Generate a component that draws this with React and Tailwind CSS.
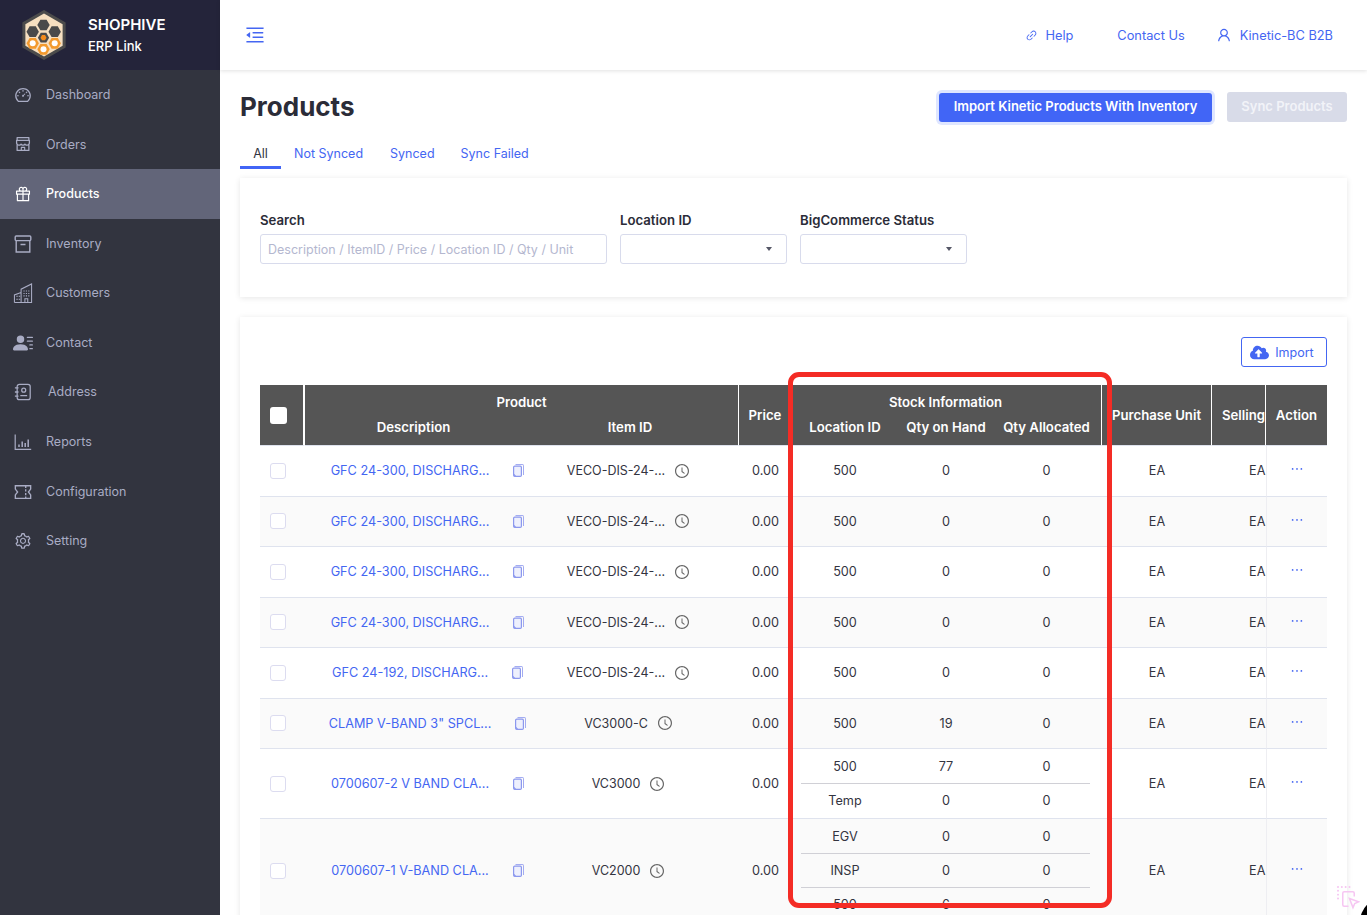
import React from "react";
import {
  AiOutlineDashboard,
  AiOutlineShop,
  AiOutlineGift,
  AiOutlineSetting,
  AiOutlineMenuFold,
  AiOutlineLink,
  AiOutlineUser,
  AiOutlineClockCircle,
  AiOutlineEllipsis,
} from "react-icons/ai";
import { BsPersonLinesFill } from "react-icons/bs";
import { FaCloudUploadAlt } from "react-icons/fa";

const hex = (cx, cy, r, flat) =>
  [0, 1, 2, 3, 4, 5]
    .map((i) => {
      const a = (Math.PI / 3) * i + (flat ? 0 : Math.PI / 6);
      return `${(cx + r * Math.cos(a)).toFixed(2)},${(cy + r * Math.sin(a)).toFixed(2)}`;
    })
    .join(" ");

const Logo = () => (
  <svg width="46" height="50" viewBox="0 0 46 50" className="shrink-0">
    <polygon points={hex(23, 25, 25)} fill="#4b4b4b" />
    <polygon points={hex(23, 25, 21.5)} fill="#f6dfc0" />
    <polygon points={hex(22.5, 15, 6.2, true)} fill="#4a4a4a" />
    <polygon points={hex(11.7, 21.7, 6.2, true)} fill="#4a4a4a" />
    <polygon points={hex(33.7, 21.7, 6.2, true)} fill="#4a4a4a" />
    <polygon points={hex(22.5, 27.7, 5.6, true)} fill="#4a4a4a" />
    <polygon points={hex(22.5, 27.7, 3, true)} fill="#f28a1c" />
    {[[11.7, 33.3], [22.5, 39.3], [33.7, 33.3]].map(([x, y]) => (
      <g key={x}>
        <polygon points={hex(x, y, 6.2, true)} fill="#f39a2e" />
        <circle cx={x} cy={y} r="3" fill="#fff" />
      </g>
    ))}
  </svg>
);

const ArchiveIcon = (props) => (
  <svg viewBox="0 0 18 18" fill="none" stroke="currentColor" strokeWidth="1.4" {...props}>
    <rect x="1.2" y="1" width="15.6" height="4.6" rx="1" />
    <path d="M2.2 5.6V17h13.6V5.6M6.5 9.5h5" />
  </svg>
);

const BuildingIcon = (props) => (
  <svg viewBox="0 0 20 21" fill="none" stroke="currentColor" strokeWidth="1.1" {...props}>
    <path d="M1 20.5v-8l7-2.5M1 20.5h18V1L8 6.500v14" />
    <path d="M3 14h1.500M5.500 14H7M3 17h1.500M5.500 17H7" />
    <path d="M10.500 8.500h1.200M13 8.500h1.200M15.500 8.500h1.200M10.500 11h1.200M13 11h1.200M15.500 11h1.200M10.500 13.500h1.200M13 13.500h1.200M15.500 13.500h1.200M12 20.500V16.500h3v4" />
  </svg>
);

const AddressIcon = (props) => (
  <svg viewBox="0 0 20 20" fill="none" stroke="currentColor" strokeWidth="1.4" {...props}>
    <rect x="3.5" y="1.5" width="14.5" height="17" rx="2.5" />
    <circle cx="10.8" cy="8" r="2.2" />
    <path d="M7 14h7.600M1 5.500h4M1 10h4M1 14.500h4" />
  </svg>
);

const ReportIcon = (props) => (
  <svg viewBox="0 0 18 18" fill="none" stroke="currentColor" strokeWidth="1.2" {...props}>
    <path d="M1.200 1.500v14.800h16" />
    <path d="M5 14v-2.500M8.200 14V8.500M11.200 14v-4M14.200 14V6.500" strokeWidth="1.5" />
  </svg>
);

const ConfigIcon = (props) => (
  <svg viewBox="0 0 20 16" fill="none" stroke="currentColor" strokeWidth="1.5" {...props}>
    <path d="M1.500 1h17v3.800L16 8l2.500 3.200V15h-17v-3.800L4 8 1.500 4.800z" />
    <path d="M13 1v14" strokeDasharray="2.5 1.5" />
  </svg>
);

const CopyIcon = () => (
  <svg width="11" height="13" viewBox="0 0 11 13" fill="none" className="shrink-0">
    <path d="M2.500 .6h7.400c.4 0 .7.3.7.7V11" stroke="#9aa4f0" strokeWidth="1" />
    <rect x="0.6" y="2.1" width="7.8" height="10.3" rx="1.2" fill="#eef0fd" stroke="#8c98ee" strokeWidth="1.2" />
    <path d="M.8 9.500l2.600 2.700H1.200z" fill="#8c98ee" />
  </svg>
);

const CursorIcon = (props) => (
  <svg viewBox="0 0 24 25" fill="none" stroke="#f6c6f2" strokeWidth="1.6" {...props}>
    <path d="M1 1h.1M5 1h.1M9 1h.1M13 1h.1M1 5h.1M1 9h.1M1 13h.1" strokeWidth="2" strokeLinecap="round" />
    <path d="M18 11V7.500A1.500 1.500 0 0 0 16.500 6h-9A1.500 1.500 0 0 0 6 7.500v12A1.500 1.500 0 0 0 7.500 21H12" />
    <path d="M13 13l9.500 3.500-4 1.700-1.800 4.300z" />
  </svg>
);

const nav = [
  { label: "Dashboard", Icon: AiOutlineDashboard },
  { label: "Orders", Icon: AiOutlineShop },
  { label: "Products", Icon: AiOutlineGift, active: true },
  { label: "Inventory", Icon: ArchiveIcon },
  { label: "Customers", Icon: BuildingIcon, big: true },
  { label: "Contact", Icon: BsPersonLinesFill, big: true },
  { label: "Address", Icon: AddressIcon, shift: true },
  { label: "Reports", Icon: ReportIcon },
  { label: "Configuration", Icon: ConfigIcon },
  { label: "Setting", Icon: AiOutlineSetting },
];

const rows = [
  { name: "GFC 24-300, DISCHARG...", item: "VECO-DIS-24-...", stock: [["500", "0", "0"]] },
  { name: "GFC 24-300, DISCHARG...", item: "VECO-DIS-24-...", stock: [["500", "0", "0"]] },
  { name: "GFC 24-300, DISCHARG...", item: "VECO-DIS-24-...", stock: [["500", "0", "0"]] },
  { name: "GFC 24-300, DISCHARG...", item: "VECO-DIS-24-...", stock: [["500", "0", "0"]] },
  { name: "GFC 24-192, DISCHARG...", item: "VECO-DIS-24-...", stock: [["500", "0", "0"]] },
  { name: 'CLAMP V-BAND 3" SPCL...', item: "VC3000-C", stock: [["500", "19", "0"]] },
  { name: "0700607-2 V BAND CLA...", item: "VC3000", stock: [["500", "77", "0"], ["Temp", "0", "0"]] },
  { name: "0700607-1 V-BAND CLA...", item: "VC2000", stock: [["EGV", "0", "0"], ["INSP", "0", "0"], ["500", "6", "0"]] },
];

const Sidebar = () => (
  <aside className="w-[220px] shrink-0 bg-[#32343f] flex flex-col">
    <div className="h-[70px] bg-[#24243a] flex items-center pl-[21px] gap-[21px]">
      <Logo />
      <div className="text-white">
        <div className="text-[15px] font-semibold leading-[22px]">SHOPHIVE</div>
        <div className="text-[13px] font-medium leading-[20px]">ERP Link</div>
      </div>
    </div>
    {nav.map(({ label, Icon, active, shift, big }) => (
      <div
        key={label}
        className={`h-[49.6px] flex items-center text-[12.5px] ${big ? "pl-[13px]" : "pl-[14px]"} ${active ? "bg-[#626579] text-white font-medium" : "text-[#a9acc4]"}`}
      >
        <span className={`shrink-0 ${big ? "w-[33px]" : "w-[32px]"}`}>
          <Icon className={big ? "w-[20px] h-[20px]" : "w-[18px] h-[18px]"} />
        </span>
        <span className={`pt-[1px] ${shift ? "ml-[2px]" : ""}`}>{label}</span>
      </div>
    ))}
  </aside>
);

const TopBar = () => (
  <header className="h-[70px] shrink-0 bg-white shadow-[0_1px_4px_rgba(0,0,0,0.12)] flex items-center justify-between pl-[24px] pr-[34px] text-[12.8px] text-[#4466f2] relative">
    <AiOutlineMenuFold className="w-[22px] h-[22px]" />
    <div className="flex items-center pt-[1px]">
      <AiOutlineLink className="w-[13px] h-[13px] mr-[7px]" />
      <span>Help</span>
      <span className="ml-[44px]">Contact Us</span>
      <AiOutlineUser className="w-[16px] h-[16px] ml-[31px] mr-[8px] -mt-[2px]" />
      <span>Kinetic-BC B2B</span>
    </div>
  </header>
);

const Select = () => (
  <div className="h-[30px] border border-[#d8dbec] rounded-[3px] flex items-center justify-end pr-[14px]">
    <span className="w-0 h-0 border-x-[3.5px] border-x-transparent border-t-[4px] border-t-[#555766]" />
  </div>
);

const Filters = () => (
  <section className="h-[119px] bg-white shadow-[0_1px_6px_rgba(0,0,0,0.1)] pt-[34px] px-[20px] flex gap-[13px] text-[13.2px]">
    <label className="block w-[347px]">
      <div className="font-semibold text-[#2b2c38] leading-[16px] mb-[6px]">Search</div>
      <input
        readOnly
        placeholder="Description / ItemID / Price / Location ID / Qty / Unit"
        className="w-full h-[30px] border border-[#d8dbec] rounded-[3px] px-[7px] text-[12.5px] placeholder:text-[#b4b7cf] outline-none"
      />
    </label>
    <div className="w-[167px]">
      <div className="font-semibold text-[#2b2c38] leading-[16px] mb-[6px]">Location ID</div>
      <Select />
    </div>
    <div className="w-[167px]">
      <div className="font-semibold text-[#2b2c38] leading-[16px] mb-[6px]">BigCommerce Status</div>
      <Select />
    </div>
  </section>
);

const th = "bg-[#555555] text-white text-[13.2px] font-semibold p-0 border-b border-b-[#dfe3ee]";
const divider = "border-r border-r-white";
const td = "border-b border-[#dfe3ee] p-0 text-center";

const stockGrid = "grid grid-cols-[88px_114px_87px] text-center";

const Table = () => (
  <table className="w-[1067px] table-fixed border-separate border-spacing-0 text-[12.7px] text-[#33343f]">
    <colgroup>
      <col className="w-[45px]" />
      <col className="w-[217px]" />
      <col className="w-[217px]" />
      <col className="w-[53px]" />
      <col className="w-[310px]" />
      <col className="w-[110px]" />
      <col className="w-[54px]" />
      <col className="w-[61px]" />
    </colgroup>
    <thead>
      <tr className="h-[32px]">
        <th rowSpan={2} className={`${th} border-r-2 border-r-white text-left pl-[10px]`}>
          <span className="block w-[17px] h-[17px] rounded-[3px] bg-white" />
        </th>
        <th colSpan={2} className={`${th} ${divider} pt-[3px] border-b-0`}>Product</th>
        <th rowSpan={2} className={`${th} ${divider} pt-[2px]`}>Price</th>
        <th className={`${th} ${divider} pt-[3px] pr-[2px] border-b-0`}>Stock Information</th>
        <th rowSpan={2} className={`${th} ${divider} pt-[2px] whitespace-nowrap`}>Purchase Unit</th>
        <th rowSpan={2} className={`${th} ${divider} pt-[2px] overflow-hidden text-left pl-[10px]`}>Selling</th>
        <th rowSpan={2} className={`${th} pt-[2px]`}>Action</th>
      </tr>
      <tr className="h-[29px]">
        <th className={`${th} pb-[6px]`}>Description</th>
        <th className={`${th} ${divider} pb-[6px]`}>Item ID</th>
        <th className={`${th} ${divider} pb-[6px] pl-[9px] pr-[12px]`}>
          <div className={stockGrid}>
            <span>Location ID</span>
            <span>Qty on Hand</span>
            <span className="whitespace-nowrap">Qty Allocated</span>
          </div>
        </th>
      </tr>
    </thead>
    <tbody>
      {rows.map((row, i) => {
        const bg = i % 2 === 1 ? "bg-[#fafafa]" : "bg-white";
        const tall = row.stock.length > 1;
        return (
          <tr key={i} className={`${bg} ${tall ? "" : "h-[50.5px]"}`}>
            <td className={`${td} text-left pl-[10px]`}>
              <span className="block w-[16px] h-[16px] rounded-[3px] border border-[#dcdcf0] bg-white" />
            </td>
            <td className={td}>
              <div className="flex items-center justify-center gap-[24px] pl-[28px] text-[#4466f2] whitespace-nowrap">
                <span>{row.name}</span>
                <CopyIcon />
              </div>
            </td>
            <td className={td}>
              <div className="flex items-center justify-center gap-[9px] pr-[4px] whitespace-nowrap">
                <span className="pt-[2px] text-[12.5px]">{row.item}</span>
                <AiOutlineClockCircle className="w-[16px] h-[16px] text-[#666666] shrink-0" />
              </div>
            </td>
            <td className={td}>0.00</td>
            <td className={`${td} pl-[9px] pr-[12px] ${tall ? "pt-[1px]" : ""}`}>
              {row.stock.map((s, j) => (
                <div
                  key={j}
                  className={`${stockGrid} h-[34px] items-center ${j < row.stock.length - 1 ? "border-b border-[#d0d0d6]" : ""}`}
                >
                  <span>{s[0]}</span>
                  <span>{s[1]}</span>
                  <span>{s[2]}</span>
                </div>
              ))}
            </td>
            <td className={td}>EA</td>
            <td className={`${td} text-left pl-[37px] overflow-hidden`}>EA</td>
            <td className={`${td} border-l border-l-[#eeeef2]`}>
              <AiOutlineEllipsis className="w-[16px] h-[16px] text-[#4466f2] mx-auto -mt-[3px]" />
            </td>
          </tr>
        );
      })}
    </tbody>
  </table>
);

export default function App() {
  return (
    <div className="relative h-[915px] w-full overflow-hidden flex bg-white font-[Inter,sans-serif]">
      <Sidebar />
      <main className="flex-1 min-w-0 flex flex-col">
        <TopBar />
        <div className="px-[20px]">
          <div className="h-[65px] flex items-center justify-between pt-[9px]">
            <h1 className="text-[26px] font-bold text-[#2b2c38] leading-none">Products</h1>
            <div className="flex items-center gap-[15px] text-[13px] font-semibold">
              <button className="w-[273px] h-[29px] bg-[#4165f6] text-white rounded-[3px] ring-[3px] ring-[#dfe6ff]">
                Import Kinetic Products With Inventory
              </button>
              <button className="w-[120px] h-[30px] bg-[#d8dbe8] text-[#f2f3f8] rounded-[3px]">
                Sync Products
              </button>
            </div>
          </div>
          <div className="h-[43px] flex text-[12.5px] text-[#4466f2] pt-[10px]">
            <div className="w-[41px] h-[24px] text-center text-[#33343f] border-b-[3px] border-[#4165f6] leading-[18px]">All</div>
            <span className="ml-[13px] leading-[18px]">Not Synced</span>
            <span className="ml-[27px] leading-[18px]">Synced</span>
            <span className="ml-[26px] leading-[18px]">Sync Failed</span>
          </div>
          <Filters />
          <section className="mt-[20px] bg-white shadow-[0_1px_6px_rgba(0,0,0,0.1)] px-[20px] pt-[20px] pb-[20px]">
            <div className="flex justify-end mb-[18px]">
              <button className="w-[86px] h-[30px] border border-[#4466f2] rounded-[3px] flex items-center justify-center gap-[6px] pr-[4px] text-[12.5px] text-[#4466f2]">
                <FaCloudUploadAlt className="w-[19px] h-[19px]" />
                <span className="pt-[2px]">Import</span>
              </button>
            </div>
            <Table />
          </section>
        </div>
      </main>
      {/* red annotation over the stock columns */}
      <div className="absolute left-[788px] top-[372px] w-[324px] h-[536px] border-[5px] border-[#f42c25] rounded-[11px] pointer-events-none" />
      <CursorIcon className="absolute left-[1337px] top-[886px] w-[23px] h-[24px]" />
      <div className="absolute left-[1360px] top-[897px] w-[50px] h-[50px] rounded-full bg-black" />
    </div>
  );
}
